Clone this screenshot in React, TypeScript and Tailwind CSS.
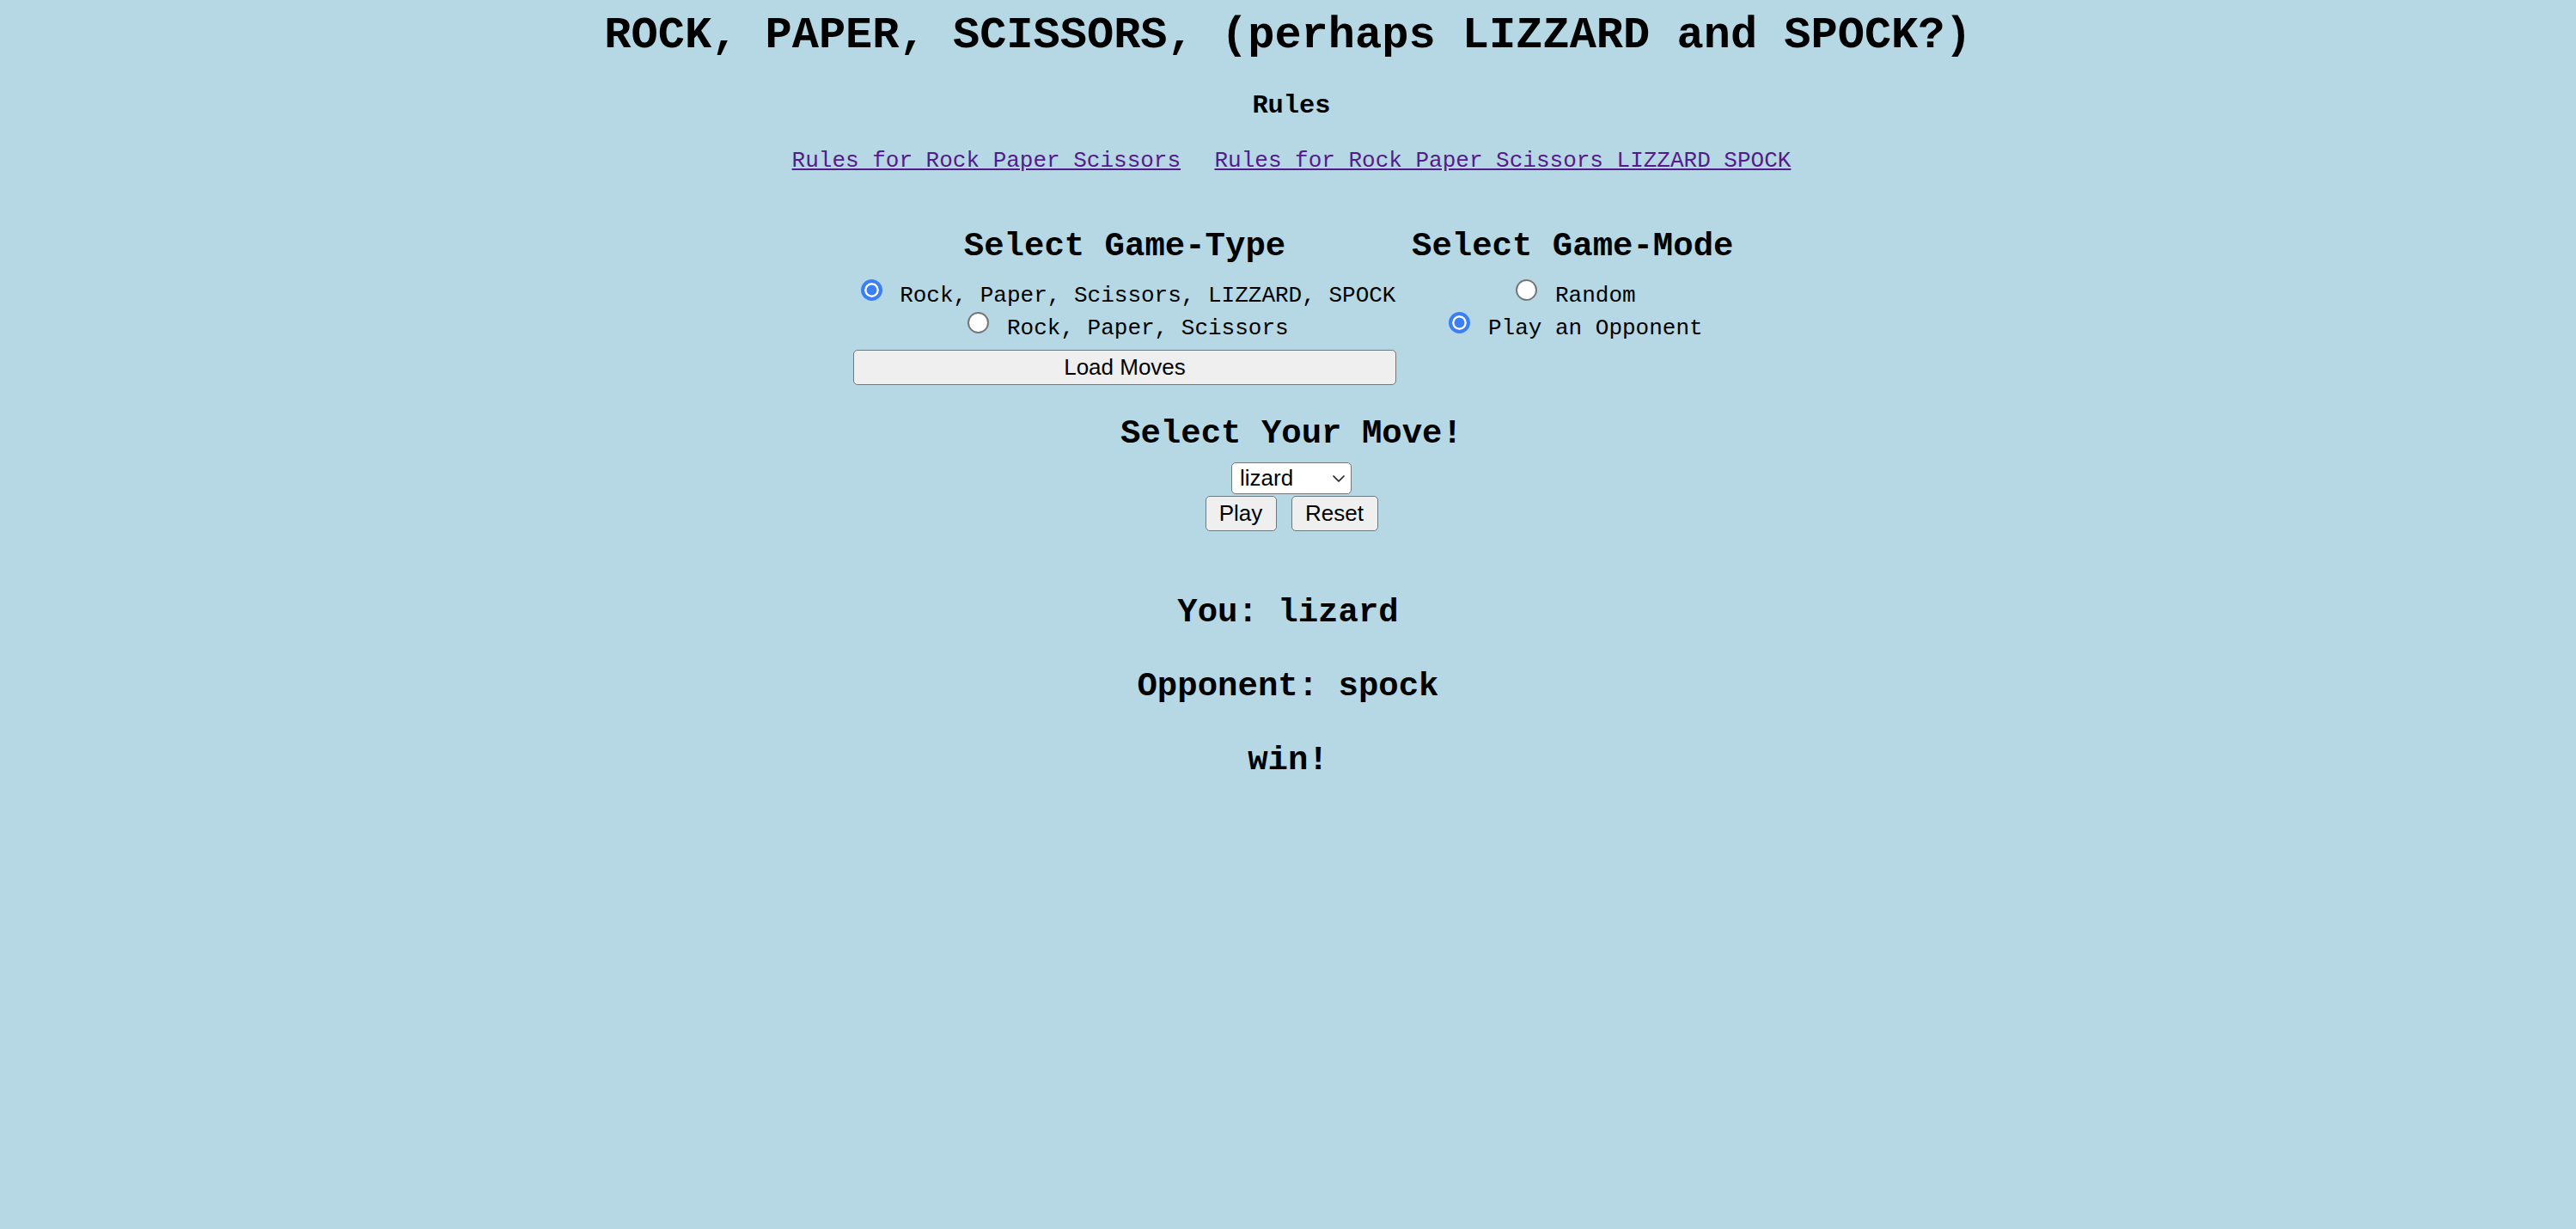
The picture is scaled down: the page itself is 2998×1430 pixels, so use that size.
import React from "react";

function Radio({ checked, name }: { checked?: boolean; name: string }) {
  return (
    <input
      type="radio"
      name={name}
      defaultChecked={checked}
      className="appearance-none block shrink-0 w-[25px] h-[25px] rounded-full bg-white border-2 border-[#767676] checked:border-[4px] checked:border-[#3b7ff6] checked:bg-[#3b7ff6] checked:shadow-[inset_0_0_0_2.5px_#ffffff] ml-[8px] mr-[5px] mt-[0.5px]"
    />
  );
}

function Option({ label, checked, name }: { label: string; checked?: boolean; name: string }) {
  return (
    <label className="flex justify-center items-start h-[37.6px]">
      <Radio checked={checked} name={name} />
      <span className="ml-[15.6px] mt-[5px] text-[26px] leading-[29.45px] whitespace-pre">{label}</span>
    </label>
  );
}

const btn =
  "bg-[#efefef] border-[1.6px] border-[#767676] rounded-[5px] text-black text-[26px] font-['Liberation_Sans',Arial,sans-serif] flex items-center justify-center";

export default function App() {
  return (
    <div className="min-h-screen w-full bg-[#b5d8e4] text-black font-['Liberation_Mono','Courier_New',monospace] pt-[12px]">
      <h1 className="text-center text-[52px] font-bold leading-[59px] whitespace-pre">
        ROCK, PAPER, SCISSORS, (perhaps LIZZARD and SPOCK?)
      </h1>
      <div className="pl-[8px]">
        <h3 className="mt-[35px] text-center text-[30.42px] font-bold leading-[34.5px]">Rules</h3>
        <p className="mt-[32.2px] text-center text-[26px] leading-[29.45px] whitespace-pre">
          <a href="#rps" className="text-[#551a8b] underline">
            Rules for Rock Paper Scissors
          </a>
          <span className="inline-block w-[39.4px]"></span>
          <a href="#rpsls" className="text-[#551a8b] underline">
            Rules for Rock Paper Scissors LIZZARD SPOCK
          </a>
        </p>

        <div className="mt-[63.3px] flex justify-center gap-[18px] pl-[4px]">
          <div className="w-[632px] flex flex-col">
            <h2 className="text-center text-[39px] font-bold leading-[44.2px] whitespace-pre">Select Game-Type</h2>
            <div className="mt-[15.3px]">
              <Option name="type" checked label="Rock, Paper, Scissors, LIZZARD, SPOCK" />
              <Option name="type" label="Rock, Paper, Scissors" />
            </div>
            <button className={`${btn} mt-[6.5px] w-full h-[41.6px]`}>Load Moves</button>
          </div>
          <div className="w-[374px] flex flex-col">
            <h2 className="text-center text-[39px] font-bold leading-[44.2px] whitespace-pre">Select Game-Mode</h2>
            <div className="mt-[15.3px]">
              <Option name="mode" label="Random" />
              <Option name="mode" checked label="Play an Opponent" />
            </div>
          </div>
        </div>

        <h2 className="mt-[35.2px] text-center text-[39px] font-bold leading-[44.2px] whitespace-pre">
          Select Your Move!
        </h2>
        <div className="mt-[10.3px] flex justify-center">
          <div className="relative w-[140px] h-[37px]">
            <select
              defaultValue="lizard"
              className="appearance-none w-full h-full bg-white border-[1.6px] border-[#767676] rounded-[5px] pl-[9px] text-[26px] leading-[30px] text-black font-['Liberation_Sans',Arial,sans-serif]"
            >
              <option value="rock">rock</option>
              <option value="paper">paper</option>
              <option value="scissors">scissors</option>
              <option value="lizard">lizard</option>
              <option value="spock">spock</option>
            </select>
            <svg
              className="absolute right-[8px] top-[15px] pointer-events-none"
              width="14"
              height="8"
              viewBox="0 0 14 8"
              fill="none"
            >
              <path d="M1 1 L7 7 L13 1" stroke="#222" strokeWidth="1.7" strokeLinecap="round" strokeLinejoin="round" />
            </svg>
          </div>
        </div>
        <div className="mt-[2px] flex justify-center gap-[17px]">
          <button className={`${btn} w-[83px] h-[41px]`}>Play</button>
          <button className={`${btn} w-[101px] h-[41px]`}>Reset</button>
        </div>
      </div>

      <div className="mt-[73.5px] flex flex-col gap-[41.8px]">
        <h2 className="text-center text-[39px] font-bold leading-[44.2px] whitespace-pre">You: lizard</h2>
        <h2 className="text-center text-[39px] font-bold leading-[44.2px] whitespace-pre">Opponent: spock</h2>
        <h2 className="text-center text-[39px] font-bold leading-[44.2px] whitespace-pre">win!</h2>
      </div>
    </div>
  );
}
